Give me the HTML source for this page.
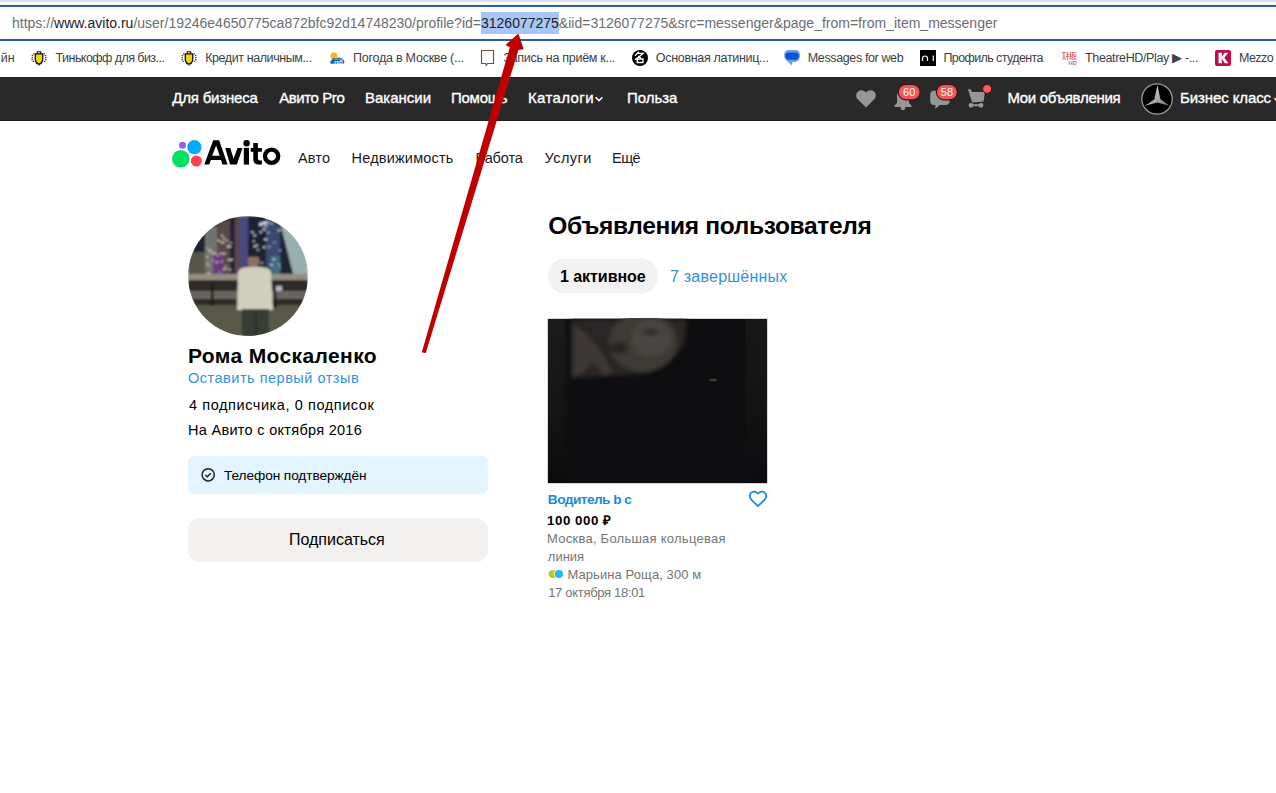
<!DOCTYPE html>
<html><head><meta charset="utf-8">
<style>
*{margin:0;padding:0;box-sizing:border-box}
html,body{width:1276px;height:793px;overflow:hidden;background:#fff;font-family:"Liberation Sans",sans-serif}
.t{position:absolute;white-space:nowrap;line-height:1}
.a{position:absolute}
#urltext{position:absolute;left:12px;top:15.9px;font-size:14px;line-height:1;color:#6b6e72;white-space:nowrap}
#urltext b{font-weight:normal;color:#1f2023}
#urltext i{font-style:normal;background:#a6c6f5;color:#1f2023;display:inline-block;padding:3.8px 0 3.8px;margin:-3.8px 0 -3.8px}
</style></head><body>
<!-- browser chrome -->
<div class="a" style="left:0;top:0;width:1276px;height:2px;background:#dee1e6"></div>
<div class="a" style="left:0;top:5px;width:1276px;height:36px;border-top:2px solid #2b5ca6;border-bottom:2px solid #2b5ca6"></div>
<div id="urltext">https://<b>www.avito.ru</b>/user/19246e4650775ca872bfc92d14748230/profile?id=<i>3126077275</i>&amp;iid=3126077275&amp;src=messenger&amp;page_from=from_item_messenger</div>

<!-- bookmark icons -->
<svg class="a" style="left:31px;top:50px" width="16" height="16" viewBox="0 0 16 16">
 <path d="M3.2 3.5 L1.2 6 L1.2 10 L3.2 12.5 M12.8 3.5 L14.8 6 L14.8 10 L12.8 12.5 M5 13 L8 15.5 L11 13" fill="none" stroke="#333" stroke-width="1.3" stroke-dasharray="1.2 0.9"/>
 <path d="M4.3 3.8 H11.7 V9.8 C11.7 11.8 10 13.2 8 14 C6 13.2 4.3 11.8 4.3 9.8 Z" fill="#f5d700" stroke="#111" stroke-width="1.3"/>
 <path d="M6.3 3.8 V1.8 H9.7 V3.8" fill="none" stroke="#111" stroke-width="1.1"/>
</svg>
<svg class="a" style="left:181px;top:50px" width="16" height="16" viewBox="0 0 16 16">
 <path d="M3.2 3.5 L1.2 6 L1.2 10 L3.2 12.5 M12.8 3.5 L14.8 6 L14.8 10 L12.8 12.5 M5 13 L8 15.5 L11 13" fill="none" stroke="#333" stroke-width="1.3" stroke-dasharray="1.2 0.9"/>
 <path d="M4.3 3.8 H11.7 V9.8 C11.7 11.8 10 13.2 8 14 C6 13.2 4.3 11.8 4.3 9.8 Z" fill="#f5d700" stroke="#111" stroke-width="1.3"/>
 <path d="M6.3 3.8 V1.8 H9.7 V3.8" fill="none" stroke="#111" stroke-width="1.1"/>
</svg>
<svg class="a" style="left:329px;top:49px" width="17" height="16" viewBox="0 0 17 16">
 <circle cx="5" cy="7" r="3.5" fill="#f5b922"/>
 <path d="M2.5 14.8 C0.8 14.8 0.8 11.5 2.8 11.2 C3.2 9 6 8.5 7.5 9.5 C9 8 13 8.3 13.8 10.8 C15.8 11 16 14.8 14 14.8 Z" fill="#1d5fae"/>
 <path d="M4 10.5 C5 9.3 8 9 9 10 C10.5 9 13 9.3 13.5 10.8 Z" fill="#6fb3e8"/>
 <text x="5.2" y="14.5" font-family="Liberation Sans" font-weight="bold" font-size="5.5" fill="#fff">гр5</text>
</svg>
<svg class="a" style="left:480px;top:49px" width="15" height="18" viewBox="0 0 15 18">
 <path d="M1.5 1.5 H13.5 V14.5 H7.5 L6.3 16.3 L5.5 14.5 H1.5 Z" fill="none" stroke="#8e3b3b" stroke-width="1.1"/>
</svg>
<svg class="a" style="left:631px;top:49px" width="18" height="18" viewBox="0 0 18 18">
 <circle cx="9" cy="9" r="8" fill="#000"/>
 <path d="M7.9 2.6 L4 6.8 M6.4 4.4 H12.2 L4 10.7 M7.1 7.4 L10 8.8 M6.2 9.6 V14.2 M6.2 10 H12 V14.2 M6.2 13.5 H12" fill="none" stroke="#fff" stroke-width="1.3"/>
</svg>
<svg class="a" style="left:784px;top:49px" width="17" height="17" viewBox="0 0 17 17">
 <path d="M4.8 0.9 H11.6 C14.6 0.9 16 3.2 16 6.3 C16 10 14.2 12.9 11.2 12.9 H8.6 L7.6 16.6 L2.6 11.4 C1 9.8 0.2 8.4 0.2 6.2 C0.2 3 2 0.9 4.8 0.9Z" fill="#6b9cf6"/>
 <rect x="1.2" y="3.5" width="13.6" height="7.2" rx="3.6" fill="#0b57d0"/>
</svg>
<svg class="a" style="left:920px;top:50px" width="16" height="16" viewBox="0 0 16 16">
 <rect x="0" y="0" width="16" height="16" rx="0.5" fill="#000"/>
 <path d="M2.5 11 V8.5 A2.5 2.5 0 0 1 7.5 8.5 V11" fill="none" stroke="#fff" stroke-width="1.2"/>
 <path d="M13.3 5.5 V11" stroke="#fff" stroke-width="1.2"/>
</svg>
<svg class="a" style="left:1061px;top:50px" width="17" height="16" viewBox="0 0 17 16">
 <g font-family="Liberation Sans" font-weight="bold" fill="#e2646c">
  <text x="0.5" y="5.6" font-size="6.2" textLength="15.5" lengthAdjust="spacingAndGlyphs">THE</text>
  <text x="1" y="10.4" font-size="6.2" textLength="15" lengthAdjust="spacingAndGlyphs">ATRE</text>
  <text x="7.5" y="15.2" font-size="6.2" textLength="8.5" lengthAdjust="spacingAndGlyphs">HD</text>
 </g>
</svg>
<svg class="a" style="left:1215px;top:50px" width="16" height="16" viewBox="0 0 16 16">
 <rect x="0" y="0" width="16" height="16" rx="2" fill="#c4094a"/>
 <path d="M3.5 2.8 H6.8 V6.6 L9.8 2.8 H13.2 L9.4 7.8 L13.4 13.2 H9.9 L6.8 8.8 V13.2 H3.5 Z" fill="#fff"/>
</svg>

<!-- header -->
<div class="a" style="left:0;top:77px;width:1276px;height:44px;background:#292929;border-top:1px solid #1d1d1d;border-bottom:1px solid #1f1f1f"></div>
<svg class="a" style="left:594px;top:95px" width="10" height="8" viewBox="0 0 10 8"><path d="M1.6 2.3 L5 5.6 L8.4 2.3" fill="none" stroke="#fff" stroke-width="1.5"/></svg>
<!-- heart -->
<svg class="a" style="left:855px;top:89px" width="22" height="20" viewBox="0 0 22 20">
 <path d="M11 18.6 L3 10.6 C0.6 8.2 0.6 4.4 3 2.4 C5.3 0.4 8.8 0.9 11 3.6 C13.2 0.9 16.7 0.4 19 2.4 C21.4 4.4 21.4 8.2 19 10.6 Z" fill="#969696"/>
</svg>
<!-- bell -->
<svg class="a" style="left:892px;top:84px" width="30" height="27" viewBox="0 0 30 27">
 <path d="M9.5 6 C5.5 6.5 5 10.5 5 14 V19 L2.5 21.5 V23 H19.5 V21.5 L17 19 V14 C17 10 16 6 11 6 Z" fill="#969696"/>
 <circle cx="11" cy="24" r="2.3" fill="#969696"/>
 <rect x="6.2" y="0.3" width="22" height="15.6" rx="7.8" fill="#f0575d" stroke="#4a0f10" stroke-width="1.2"/>
 <text x="17.2" y="12.4" text-anchor="middle" font-family="Liberation Sans" font-size="11" fill="#fff">60</text>
</svg>
<!-- chat -->
<svg class="a" style="left:929px;top:84px" width="30" height="27" viewBox="0 0 30 27">
 <path d="M4.5 6.8 H16.5 C19 6.8 20.8 8.6 20.8 11 V16.7 C20.8 19 19 21 16.5 21 H11 L6.3 24.8 V21 H4.5 C2.5 21 1.2 19.2 1.2 17 V11 C1.2 8.6 2.5 6.8 4.5 6.8Z" fill="#969696"/>
 <rect x="7.4" y="0.3" width="21" height="15.6" rx="7.8" fill="#f0575d" stroke="#4a0f10" stroke-width="1.2"/>
 <text x="17.9" y="12.4" text-anchor="middle" font-family="Liberation Sans" font-size="11" fill="#fff">58</text>
</svg>
<!-- cart -->
<svg class="a" style="left:966px;top:84px" width="27" height="26" viewBox="0 0 27 26">
 <path d="M2 5.5 L4.5 5 L6 8 H19 L17.5 17.5 L6.2 18.5 Z" fill="#969696"/>
 <rect x="4.5" y="20.2" width="11" height="2" fill="#969696"/>
 <circle cx="5" cy="21.3" r="2.4" fill="#969696"/><circle cx="15" cy="21.3" r="2.4" fill="#969696"/>
 <circle cx="21.1" cy="4.9" r="4.5" fill="#ff5a5f" stroke="#4a0f10" stroke-width="1"/>
</svg>
<!-- mercedes -->
<svg class="a" style="left:1141px;top:83px" width="32" height="32" viewBox="0 0 32 32">
 <defs><linearGradient id="mg" x1="0" y1="0" x2="1" y2="1"><stop offset="0" stop-color="#eee"/><stop offset="1" stop-color="#777"/></linearGradient></defs>
 <circle cx="16" cy="16" r="15.2" fill="#000" stroke="#9a9a9a" stroke-width="1.3"/>
 <path d="M16.4 2 L19.4 16.3 L28.4 22.8 L16.2 19.6 L4.2 22.8 L13.4 16.3 Z" fill="url(#mg)"/>
</svg>

<svg class="a" style="left:1273px;top:95px" width="3" height="8" viewBox="0 0 3 8"><path d="M1.4 3.3 L4.8 6.6" fill="none" stroke="#fff" stroke-width="1.5"/></svg>
<!-- logo -->
<svg class="a" style="left:168px;top:134px" width="120" height="40" viewBox="168 134 120 40">
 <circle cx="182.5" cy="145.3" r="3.5" fill="#965eeb"/>
 <circle cx="194.4" cy="147.2" r="7.1" fill="#00aaff"/>
 <circle cx="180.8" cy="158.7" r="8.8" fill="#04e061"/>
 <circle cx="196.4" cy="161" r="5.5" fill="#ff4053"/>
 <path fill-rule="evenodd" d="M204.3 164.6 L213.2 140.3 L219.1 140.3 L227.6 164.6 L222.4 164.6 L221.1 160 L210.9 160 L209.2 164.6 Z M212.2 155.7 L219.7 155.7 L216.1 145.5 Z" fill="#000"/>
 <path d="M225.3 147.9 L230.3 147.9 L233.6 158.8 L237.5 147.9 L242.5 147.9 L236.9 164.6 L230 164.6 Z" fill="#000"/>
 <rect x="243.8" y="147.9" width="5.2" height="16.7" fill="#000"/>
 <circle cx="246.6" cy="143.2" r="3.2" fill="#000"/>
 <path d="M253.3 142.9 H257.9 V147.9 H261.9 V151.8 H257.9 V158.5 C257.9 160 258.6 160.4 260 160.4 H261.9 V164.6 H259.3 C255.2 164.6 253.3 162.8 253.3 158.9 V151.8 H250.7 V147.9 H253.3 Z" fill="#000"/>
 <circle cx="271.6" cy="156.2" r="6.6" fill="none" stroke="#000" stroke-width="4.3"/>
</svg>

<!-- avatar -->
<svg class="a" style="left:188px;top:216px" width="120" height="120" viewBox="0 0 120 120">
 <defs>
  <clipPath id="cc"><circle cx="60" cy="60" r="60"/></clipPath>
  <filter id="bl" x="-5%" y="-5%" width="110%" height="110%"><feGaussianBlur stdDeviation="0.9"/></filter>
 </defs>
 <g clip-path="url(#cc)">
  <g filter="url(#bl)">
   <rect width="120" height="120" fill="#3a3834"/>
   <rect x="0" y="0" width="120" height="62" fill="#1c2030"/>
   <rect x="0" y="36" width="18" height="26" fill="#5a544c"/>
   <rect x="17" y="11" width="12" height="50" fill="#6e7470"/>
   <rect x="29" y="5" width="13" height="56" fill="#5a4a48"/>
   <rect x="42" y="0" width="5" height="60" fill="#282430"/>
   <rect x="47" y="0" width="6" height="60" fill="#584a50"/>
   <rect x="52" y="0" width="9" height="60" fill="#4a4a80"/>
   <rect x="25" y="37" width="11" height="22" fill="#6a3a80"/>
   <rect x="60" y="0" width="18" height="60" fill="#1a2234"/>
   <rect x="78" y="2" width="14" height="60" fill="#3a4a70"/>
   <rect x="83" y="40" width="9" height="20" fill="#407080"/>
   <path d="M92 6 L120 20 L120 62 L106 62 Z" fill="#8fa8a8"/>
   <path d="M93.0 10 L120 16.0" stroke="#cfe0dc" stroke-width="0.9" opacity="0.55"/><path d="M94.1 14 L120 20.0" stroke="#cfe0dc" stroke-width="0.9" opacity="0.55"/><path d="M95.1 18 L120 24.0" stroke="#cfe0dc" stroke-width="0.9" opacity="0.55"/><path d="M96.2 22 L120 28.0" stroke="#cfe0dc" stroke-width="0.9" opacity="0.55"/><path d="M97.2 26 L120 32.0" stroke="#cfe0dc" stroke-width="0.9" opacity="0.55"/><path d="M98.2 30 L120 36.0" stroke="#cfe0dc" stroke-width="0.9" opacity="0.55"/><path d="M99.3 34 L120 40.0" stroke="#cfe0dc" stroke-width="0.9" opacity="0.55"/><path d="M100.3 38 L120 44.0" stroke="#cfe0dc" stroke-width="0.9" opacity="0.55"/><path d="M101.4 42 L120 48.0" stroke="#cfe0dc" stroke-width="0.9" opacity="0.55"/><path d="M102.4 46 L120 52.0" stroke="#cfe0dc" stroke-width="0.9" opacity="0.55"/><path d="M103.4 50 L120 56.0" stroke="#cfe0dc" stroke-width="0.9" opacity="0.55"/><path d="M104.5 54 L120 60.0" stroke="#cfe0dc" stroke-width="0.9" opacity="0.55"/><path d="M105.5 58 L120 64.0" stroke="#cfe0dc" stroke-width="0.9" opacity="0.55"/><path d="M92 8 L106 62 L92 62 Z" fill="#1e2832"/>
   <rect x="22.9" y="37.0" width="3.8" height="1.3" fill="#b0b0a0"/>
   <rect x="28.9" y="38.7" width="1.5" height="1.3" fill="#e8e0d0"/>
   <rect x="37.9" y="23.9" width="2.0" height="1.3" fill="#d8d8c8"/>
   <rect x="34.9" y="36.9" width="2.7" height="1.3" fill="#e8e0d0"/>
   <rect x="33.0" y="18.9" width="1.9" height="1.3" fill="#e8e0d0"/>
   <rect x="40.1" y="29.9" width="3.2" height="1.3" fill="#d8d8c8"/>
   <rect x="18.6" y="46.9" width="1.6" height="1.3" fill="#e8e0d0"/>
   <rect x="36.5" y="49.9" width="2.7" height="1.3" fill="#b0b0a0"/>
   <rect x="35.0" y="52.4" width="3.5" height="1.3" fill="#e8e0d0"/>
   <rect x="27.7" y="45.5" width="2.6" height="1.3" fill="#e8e0d0"/>
   <rect x="40.4" y="52.4" width="1.6" height="1.3" fill="#d8d8c8"/>
   <rect x="29.4" y="23.9" width="2.6" height="1.3" fill="#e8e0d0"/>
   <rect x="32.7" y="25.8" width="3.6" height="1.3" fill="#e8e0d0"/>
   <rect x="31.4" y="36.6" width="3.0" height="1.3" fill="#b0b0a0"/>
   <rect x="39.6" y="43.4" width="3.6" height="1.3" fill="#d8d8c8"/>
   <rect x="41.8" y="42.9" width="3.2" height="1.3" fill="#d8d8c8"/>
   <rect x="25.2" y="36.9" width="2.9" height="1.3" fill="#e8e0d0"/>
   <rect x="34.8" y="21.7" width="2.2" height="1.3" fill="#e8e0d0"/>
   <rect x="20.1" y="34.2" width="4.0" height="1.3" fill="#e8e0d0"/>
   <rect x="19.2" y="48.8" width="3.7" height="1.3" fill="#b0b0a0"/>
   <rect x="17.5" y="31.6" width="3.7" height="1.3" fill="#b0b0a0"/>
   <rect x="18.1" y="40.3" width="2.4" height="1.3" fill="#d8d8c8"/>
   <rect x="31.7" y="37.3" width="2.8" height="1.3" fill="#b0b0a0"/>
   <rect x="42.0" y="26.2" width="1.8" height="1.3" fill="#d8d8c8"/>
   <rect x="30.4" y="55.6" width="2.2" height="1.3" fill="#b0b0a0"/>
   <rect x="23.6" y="43.7" width="2.3" height="1.3" fill="#b0b0a0"/>
   <rect x="41.0" y="53.2" width="2.4" height="1.3" fill="#b0b0a0"/>
   <rect x="38.7" y="29.8" width="3.2" height="1.3" fill="#e8e0d0"/>
   <rect x="19.6" y="56.8" width="2.2" height="1.3" fill="#e8e0d0"/>
   <rect x="32.9" y="44.9" width="2.6" height="1.3" fill="#b0b0a0"/>
   <rect x="64.6" y="15.9" width="1.5" height="1.3" fill="#c0c8d8"/>
   <rect x="67.5" y="28.7" width="2.4" height="1.3" fill="#e8e8f0"/>
   <rect x="70.6" y="8.1" width="3.1" height="1.3" fill="#ffffff"/>
   <rect x="68.4" y="33.2" width="3.0" height="1.3" fill="#c0c8d8"/>
   <rect x="65.0" y="24.5" width="1.7" height="1.3" fill="#ffffff"/>
   <rect x="72.2" y="46.3" width="3.1" height="1.3" fill="#c0c8d8"/>
   <rect x="65.4" y="29.7" width="2.4" height="1.3" fill="#e8e8f0"/>
   <rect x="65.6" y="19.0" width="2.2" height="1.3" fill="#ffffff"/>
   <rect x="74.2" y="6.8" width="3.9" height="1.3" fill="#e8e8f0"/>
   <rect x="72.3" y="8.0" width="2.1" height="1.3" fill="#ffffff"/>
   <rect x="74.5" y="13.0" width="3.2" height="1.3" fill="#e8e8f0"/>
   <rect x="71.7" y="6.5" width="2.3" height="1.3" fill="#ffffff"/>
   <rect x="66.0" y="40.3" width="3.5" height="1.3" fill="#c0c8d8"/>
   <rect x="77.3" y="5.7" width="3.1" height="1.3" fill="#ffffff"/>
   <rect x="75.9" y="22.8" width="3.5" height="1.3" fill="#e8e8f0"/>
   <rect x="60.6" y="46.0" width="3.5" height="1.3" fill="#c0c8d8"/>
   <rect x="75.1" y="10.4" width="2.4" height="1.3" fill="#c0c8d8"/>
   <rect x="74.9" y="5.9" width="2.4" height="1.3" fill="#ffffff"/>
   <rect x="62.3" y="15.4" width="2.7" height="1.3" fill="#c0c8d8"/>
   <rect x="71.4" y="15.4" width="2.5" height="1.3" fill="#ffffff"/>
   <rect x="76.6" y="9.2" width="2.7" height="1.3" fill="#e8e8f0"/>
   <rect x="75.0" y="30.6" width="2.6" height="1.3" fill="#ffffff"/>
   <rect x="91.3" y="51.4" width="1.6" height="1.3" fill="#a0b0e0"/>
   <rect x="84.4" y="42.7" width="2.9" height="1.3" fill="#d0d8f0"/>
   <rect x="90.5" y="48.1" width="1.8" height="1.3" fill="#d0d8f0"/>
   <rect x="81.4" y="6.8" width="3.7" height="1.3" fill="#a0b0e0"/>
   <rect x="90.6" y="33.8" width="2.7" height="1.3" fill="#a0b0e0"/>
   <rect x="79.7" y="30.2" width="3.2" height="1.3" fill="#a0b0e0"/>
   <rect x="85.3" y="25.7" width="2.4" height="1.3" fill="#a0b0e0"/>
   <rect x="81.5" y="48.1" width="3.5" height="1.3" fill="#d0d8f0"/>
   <rect x="78.9" y="16.0" width="2.8" height="1.3" fill="#a0b0e0"/>
   <rect x="89.4" y="13.6" width="3.8" height="1.3" fill="#d0d8f0"/>
   <rect x="40.3" y="72.6" width="2.7" height="1.3" fill="#80c090"/>
   <rect x="28.5" y="69.2" width="2.1" height="1.3" fill="#a0a8b0"/>
   <rect x="30.9" y="70.2" width="2.7" height="1.3" fill="#80c090"/>
   <rect x="38.8" y="66.0" width="3.4" height="1.3" fill="#80c090"/>
   <rect x="2.3" y="66.4" width="3.9" height="1.3" fill="#a0a8b0"/>
   <rect x="42.7" y="66.7" width="2.7" height="1.3" fill="#c8c0c0"/>
   <rect x="7.9" y="66.6" width="3.1" height="1.3" fill="#a0a8b0"/>
   <rect x="29.3" y="68.9" width="4.0" height="1.3" fill="#80c090"/>
   <rect x="21.4" y="67.0" width="3.3" height="1.3" fill="#80c090"/>
   <rect x="19.0" y="66.6" width="1.6" height="1.3" fill="#80c090"/>
   <rect x="0" y="58" width="120" height="6" fill="#958d80"/>
   <rect x="0" y="64" width="120" height="11" fill="#2e2a26"/>
   <rect x="0" y="75" width="120" height="9" fill="#686660"/>
   <rect x="0" y="83" width="120" height="6" fill="#2e2c26"/>
   <rect x="0" y="89" width="120" height="31" fill="#5a5846"/>
   <rect x="23" y="66" width="2.5" height="24" fill="#1e1c18"/>
   <rect x="86" y="68" width="2.5" height="24" fill="#1e1c18"/>
   <rect x="88" y="70" width="6" height="5" fill="#b8b0c8"/>
   <rect x="60" y="38" width="11" height="14" rx="5" fill="#8a7262"/>
   <rect x="60" y="37" width="11" height="4" rx="2" fill="#2a2420"/>
   <path d="M50 56 C51 52 57 51 62 51 L70 51 C76 51 82 52 83 56 L85 94 L49 94 Z" fill="#cfcfbc"/>
   <rect x="54" y="93" width="27" height="28" fill="#383c34"/>
   <rect x="67" y="96" width="1.5" height="24" fill="#262822"/>
  </g>
 </g>
</svg>

<!-- phone box & button -->
<div class="a" style="left:188px;top:456px;width:300px;height:38px;border-radius:6px;background:#e2f4fd"></div>
<svg class="a" style="left:200px;top:467px" width="16" height="16" viewBox="0 0 16 16"><circle cx="8.2" cy="7.8" r="6.1" fill="none" stroke="#222" stroke-width="1.5"/><path d="M5.4 8 L7.3 9.8 L10.8 6.2" fill="none" stroke="#222" stroke-width="1.5"/></svg>
<div class="a" style="left:188px;top:518px;width:300px;height:44px;border-radius:12px;background:#f2f1f0"></div>

<!-- pill -->
<div class="a" style="left:548px;top:258px;width:110px;height:36px;border-radius:18px;background:#f2f2f2"></div>

<!-- item image -->
<svg class="a" style="left:547px;top:318px" width="221" height="166" viewBox="0 0 221 166">
 <defs>
  <filter id="b2" x="0" y="0" width="221" height="166" filterUnits="userSpaceOnUse"><feGaussianBlur stdDeviation="2"/></filter>
  <linearGradient id="lg" x1="0" y1="0" x2="0" y2="166" gradientUnits="userSpaceOnUse"><stop offset="0" stop-color="#1b1b1c"/><stop offset="0.55" stop-color="#151516"/><stop offset="1" stop-color="#0b0b0d"/></linearGradient>
  <linearGradient id="lh" x1="0" y1="0" x2="22" y2="0" gradientUnits="userSpaceOnUse"><stop offset="0" stop-color="#0e0e11" stop-opacity="0"/><stop offset="0.7" stop-color="#0e0e11" stop-opacity="0"/><stop offset="1" stop-color="#0e0e11" stop-opacity="1"/></linearGradient>
 </defs>
 <rect x="0.5" y="0.5" width="220" height="165" fill="#0e0e11" stroke="#d6d6d6" stroke-width="1"/>
 <rect x="1" y="1" width="22" height="164" fill="url(#lg)"/>
 <rect x="1" y="1" width="22" height="164" fill="url(#lh)"/>
 <rect x="199" y="1" width="21" height="164" fill="url(#lg)" opacity="0.7"/>
 <g filter="url(#b2)">
  <path d="M24 1 L140 1 L138 22 C130 40 118 52 96 56 L60 58 L24 60 Z" fill="#2a2725"/>
  <ellipse cx="96" cy="24" rx="34" ry="30" fill="#3e3a36"/>
  <ellipse cx="104" cy="20" rx="20" ry="19" fill="#4a4540"/>
  <path d="M26 8 C36 12 46 22 54 34 L66 54 L58 58 L46 44 L34 56 L26 58 Z" fill="#3e3934"/>
  <ellipse cx="72" cy="30" rx="9" ry="6" fill="#2c2826"/>
  <ellipse cx="104" cy="14" rx="8" ry="3" fill="#2e2a28"/>
 </g>
 <ellipse cx="166" cy="62" rx="4" ry="1.3" fill="#5a5a58" opacity="0.6"/>
</svg>

<!-- item heart + metro -->
<svg class="a" style="left:748px;top:490px" width="20" height="18" viewBox="0 0 20 18">
 <path d="M10 16.2 L3.3 9.6 C1.3 7.6 1.3 4.3 3.3 2.6 C5.2 1 8.1 1.4 10 3.7 C11.9 1.4 14.8 1 16.7 2.6 C18.7 4.3 18.7 7.6 16.7 9.6 Z" fill="none" stroke="#1d8ae0" stroke-width="1.8" stroke-linejoin="round"/>
</svg>
<svg class="a" style="left:548px;top:569px" width="16" height="10" viewBox="0 0 16 10">
 <circle cx="4.8" cy="5" r="4.1" fill="#b9cc2a"/>
 <circle cx="11" cy="5" r="4.8" fill="#fff"/>
 <circle cx="11" cy="5" r="4.1" fill="#28b8ec"/>
</svg>

<div id="bm0" class="t" style="right:1261.40px;top:52.38px;font-size:12.5px;font-weight:normal;color:#3c4043;letter-spacing:0.000px">йн</div>
<div id="bm1" class="t" style="left:55.60px;top:52.38px;font-size:12.5px;font-weight:normal;color:#3c4043;letter-spacing:-0.556px">Тинькофф для биз...</div>
<div id="bm2" class="t" style="left:205.20px;top:52.38px;font-size:12.5px;font-weight:normal;color:#3c4043;letter-spacing:-0.412px">Кредит наличным...</div>
<div id="bm3" class="t" style="left:353.00px;top:52.38px;font-size:12.5px;font-weight:normal;color:#3c4043;letter-spacing:-0.237px">Погода в Москве (...</div>
<div id="bm4" class="t" style="left:503.40px;top:52.38px;font-size:12.5px;font-weight:normal;color:#3c4043;letter-spacing:-0.289px">Запись на приём к...</div>
<div id="bm5" class="t" style="left:655.80px;top:52.38px;font-size:12.5px;font-weight:normal;color:#3c4043;letter-spacing:-0.311px">Основная латиниц...</div>
<div id="bm6" class="t" style="left:807.80px;top:52.38px;font-size:12.5px;font-weight:normal;color:#3c4043;letter-spacing:-0.373px">Messages for web</div>
<div id="bm7" class="t" style="left:943.40px;top:52.38px;font-size:12.5px;font-weight:normal;color:#3c4043;letter-spacing:-0.593px">Профиль студента</div>
<div id="bm8" class="t" style="left:1085.00px;top:52.38px;font-size:12.5px;font-weight:normal;color:#3c4043;letter-spacing:-0.350px">TheatreHD/Play ▶ -...</div>
<div id="bm9" class="t" style="left:1239.00px;top:52.38px;font-size:12.5px;font-weight:normal;color:#3c4043;letter-spacing:-0.500px">Mezzo</div>
<div id="h0" class="t" style="left:172.20px;top:90.05px;font-size:15px;font-weight:normal;color:#fff;letter-spacing:-0.180px;-webkit-text-stroke:0.35px #fff">Для бизнеса</div>
<div id="h1" class="t" style="left:279.20px;top:90.05px;font-size:15px;font-weight:normal;color:#fff;letter-spacing:-0.413px;-webkit-text-stroke:0.35px #fff">Авито Pro</div>
<div id="h2" class="t" style="left:365.00px;top:90.05px;font-size:15px;font-weight:normal;color:#fff;letter-spacing:0.000px;-webkit-text-stroke:0.35px #fff">Вакансии</div>
<div id="h3" class="t" style="left:451.00px;top:90.05px;font-size:15px;font-weight:normal;color:#fff;letter-spacing:-0.260px;-webkit-text-stroke:0.35px #fff">Помощь</div>
<div id="h4" class="t" style="left:528.00px;top:90.05px;font-size:15px;font-weight:normal;color:#fff;letter-spacing:0.371px;-webkit-text-stroke:0.35px #fff">Каталоги</div>
<div id="h5" class="t" style="left:627.00px;top:90.05px;font-size:15px;font-weight:normal;color:#fff;letter-spacing:-0.040px;-webkit-text-stroke:0.35px #fff">Польза</div>
<div id="h6" class="t" style="left:1007.40px;top:90.05px;font-size:15px;font-weight:normal;color:#fff;letter-spacing:-0.285px;-webkit-text-stroke:0.35px #fff">Мои объявления</div>
<div id="h7" class="t" style="left:1180.00px;top:90.05px;font-size:15px;font-weight:normal;color:#fff;letter-spacing:-0.100px;-webkit-text-stroke:0.35px #fff">Бизнес класс</div>
<div id="n0" class="t" style="left:298.00px;top:150.58px;font-size:14.5px;font-weight:normal;color:#1a1a1a;letter-spacing:0.133px">Авто</div>
<div id="n1" class="t" style="left:351.60px;top:150.58px;font-size:14.5px;font-weight:normal;color:#1a1a1a;letter-spacing:0.182px">Недвижимость</div>
<div id="n2" class="t" style="left:475.60px;top:150.58px;font-size:14.5px;font-weight:normal;color:#1a1a1a;letter-spacing:-0.120px">Работа</div>
<div id="n3" class="t" style="left:544.60px;top:150.58px;font-size:14.5px;font-weight:normal;color:#1a1a1a;letter-spacing:0.420px">Услуги</div>
<div id="n4" class="t" style="left:612.00px;top:150.58px;font-size:14.5px;font-weight:normal;color:#1a1a1a;letter-spacing:-0.500px">Ещё</div>
<div id="p0" class="t" style="left:188.00px;top:344.85px;font-size:21px;font-weight:bold;color:#000;letter-spacing:0.386px">Рома Москаленко</div>
<div id="p1" class="t" style="left:188.00px;top:371.28px;font-size:14.5px;font-weight:normal;color:#3391e0;letter-spacing:0.505px">Оставить первый отзыв</div>
<div id="p2" class="t" style="left:189.00px;top:397.88px;font-size:14.5px;font-weight:normal;color:#000;letter-spacing:0.578px">4 подписчика, 0 подписок</div>
<div id="p3" class="t" style="left:188.00px;top:423.48px;font-size:14.5px;font-weight:normal;color:#000;letter-spacing:0.295px">На Авито с октября 2016</div>
<div id="p4" class="t" style="left:224.00px;top:469.25px;font-size:13.7px;font-weight:normal;color:#000;letter-spacing:-0.094px">Телефон подтверждён</div>
<div id="p5" class="t" style="left:289.00px;top:531.60px;font-size:16px;font-weight:normal;color:#000;letter-spacing:-0.010px">Подписаться</div>
<div id="r0" class="t" style="left:548.20px;top:213.98px;font-size:24.5px;font-weight:bold;color:#000;letter-spacing:-0.323px">Объявления пользователя</div>
<div id="r1" class="t" style="left:560.00px;top:268.80px;font-size:16px;font-weight:bold;color:#000;letter-spacing:-0.044px">1 активное</div>
<div id="r2" class="t" style="left:670.00px;top:268.70px;font-size:16px;font-weight:normal;color:#3391e0;letter-spacing:0.225px">7 завершённых</div>
<div id="i0" class="t" style="left:547.80px;top:493.16px;font-size:13.7px;font-weight:bold;color:#1d8ae0;letter-spacing:-0.555px">Водитель b c</div>
<div id="i1" class="t" style="left:547.00px;top:513.50px;font-size:13.3px;font-weight:bold;color:#000;letter-spacing:0.550px">100 000 ₽</div>
<div id="i2" class="t" style="left:547.00px;top:531.75px;font-size:13px;font-weight:normal;color:#757575;letter-spacing:0.250px">Москва, Большая кольцевая</div>
<div id="i3" class="t" style="left:547.80px;top:549.75px;font-size:13px;font-weight:normal;color:#757575;letter-spacing:0.000px">линия</div>
<div id="i4" class="t" style="left:567.40px;top:567.55px;font-size:13px;font-weight:normal;color:#757575;letter-spacing:0.089px">Марьина Роща, 300 м</div>
<div id="i5" class="t" style="left:548.20px;top:585.65px;font-size:13px;font-weight:normal;color:#757575;letter-spacing:-0.313px">17 октября 18:01</div>

<!-- red arrow -->
<svg id="arrow" class="a" style="left:0;top:0" width="1276" height="400" viewBox="0 0 1276 400">
 <path d="M518 34.8 L522.6 48.6 L517.8 49.2 L425.2 352.2 L422.8 351.6 L510.8 46.8 L506.8 44.8 Z" fill="#c00000" stroke="#c00000" stroke-width="1.6" stroke-linejoin="round"/>
</svg>
</body></html>
